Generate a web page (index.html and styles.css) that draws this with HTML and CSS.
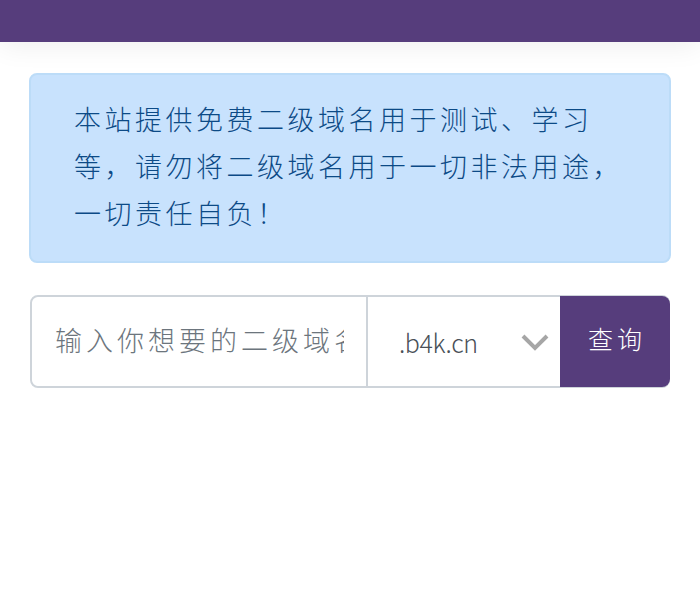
FILE: index.html
```html
<!DOCTYPE html>
<html lang="zh-CN">
<head>
  <meta charset="UTF-8">
  <meta name="viewport" content="width=device-width, initial-scale=1.0">
  <title>二级域名查询</title>
  <link rel="stylesheet" href="styles.css">
</head>
<body>
  <header class="top-bar"></header>

  <main class="content">
    <div class="notice">本站提供免费二级域名用于测试、学习等，请勿将二级域名用于一切非法用途，一切责任自负！</div>

    <form class="query-form">
      <input class="query-input" type="text" placeholder="输入你想要的二级域名">
      <div class="suffix">
        <span class="suffix-text">.b4k.cn</span>
        <svg class="suffix-arrow" viewBox="0 0 28 18" width="28" height="18">
          <path d="M2 3 L14 15 L26 3" fill="none" stroke="#a6a6a6" stroke-width="4"/>
        </svg>
      </div>
      <button class="query-btn" type="button">查询</button>
    </form>
  </main>
</body>
</html>
```

FILE: styles.css
```css
* {
  box-sizing: border-box;
}

body {
  margin: 0;
  padding: 0;
  height: 594px;
  overflow: hidden;
  background: #fff;
  font-family: "Noto Sans CJK SC", "Noto Sans", sans-serif;
  font-weight: 300;
}

.top-bar {
  height: 42px;
  background: #563d7c;
  box-shadow: 0 4px 28px rgba(0, 0, 0, 0.07);
}

.content {
  padding: 31px 29px 0;
}

.notice {
  height: 190px;
  padding: 20px 43px 0;
  background: #c8e2fd;
  border: 2px solid #bcdcf8;
  border-radius: 8px;
  color: #0c4a86;
  font-size: 27px;
  letter-spacing: 3.5px;
  line-height: 47px;
}

.query-form {
  display: flex;
  height: 93px;
  margin: 32px 1px 0;
  border: 2px solid #ced4da;
  border-radius: 8px;
}

.query-input {
  flex: 0 0 336px;
  min-width: 0;
  padding: 0 22px 4px 23px;
  border: 0;
  border-right: 2px solid #ced4da;
  border-radius: 8px 0 0 8px;
  outline: none;
  font-family: inherit;
  font-size: 27px;
  font-weight: 300;
  letter-spacing: 4px;
}

.query-input::placeholder {
  color: #6c757d;
  opacity: 1;
}

.suffix {
  flex: 1;
  display: flex;
  align-items: center;
  justify-content: space-between;
  padding: 0 11px 0 31px;
}

.suffix-text {
  color: #495057;
  font-size: 25px;
  letter-spacing: -0.4px;
}

.query-btn {
  flex: 0 0 110px;
  margin: -1px -2px -1px 0;
  padding: 0 0 7px 4px;
  border: 0;
  border-radius: 0 8px 8px 0;
  background: #563d7c;
  color: #fff;
  font-family: inherit;
  font-size: 25px;
  font-weight: 300;
  letter-spacing: 4px;
}
```
